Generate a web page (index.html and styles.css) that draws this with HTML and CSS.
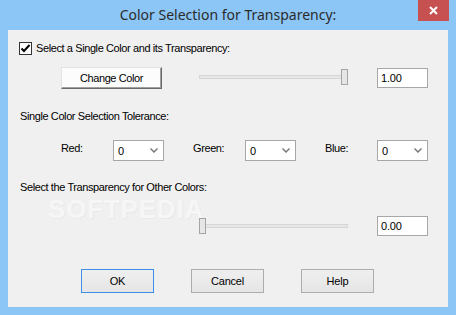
FILE: index.html
```html
<!DOCTYPE html>
<html lang="en">
  <head>
    <meta charset="UTF-8" />
    <title>Color Selection for Transparency:</title>
    <link rel="stylesheet" href="styles.css">
  </head>
  <body>
    <div class="window">
      <div class="titlebar">
        <span class="title">Color Selection for Transparency:</span>
        <span class="close">
          <svg width="9" height="9" viewBox="0 0 9 9">
            <path d="M1 1 L8 8 M8 1 L1 8" stroke="#fff" stroke-width="2" />
          </svg>
        </span>
      </div>

      <div class="client">
        <div class="watermark">SOFTPEDIA</div>

        <label class="check-row">
          <span class="checkbox">
            <svg width="11" height="11" viewBox="0 0 11 11">
              <path d="M1.5 5.5 L4 8 L9.5 2" stroke="#000" stroke-width="2" fill="none" />
            </svg>
          </span>
          <span class="text">Select a Single Color and its Transparency:</span>
        </label>

        <div class="row row-color">
          <button class="classic-btn">Change Color</button>
          <div class="slider">
            <div class="track"></div>
            <div class="thumb" style="left: 142px"></div>
          </div>
          <div class="edit">1.00</div>
        </div>

        <div class="text section">Single Color Selection Tolerance:</div>

        <div class="row row-tolerance">
          <span class="text field-label">Red:</span>
          <div class="combo">
            <span>0</span>
            <svg width="8" height="5" viewBox="0 0 8 5">
              <path d="M0.5 0.5 L4 4 L7.5 0.5" stroke="#7a7a7a" stroke-width="1.5" fill="none" />
            </svg>
          </div>
          <span class="text field-label">Green:</span>
          <div class="combo">
            <span>0</span>
            <svg width="8" height="5" viewBox="0 0 8 5">
              <path d="M0.5 0.5 L4 4 L7.5 0.5" stroke="#7a7a7a" stroke-width="1.5" fill="none" />
            </svg>
          </div>
          <span class="text field-label">Blue:</span>
          <div class="combo">
            <span>0</span>
            <svg width="8" height="5" viewBox="0 0 8 5">
              <path d="M0.5 0.5 L4 4 L7.5 0.5" stroke="#7a7a7a" stroke-width="1.5" fill="none" />
            </svg>
          </div>
        </div>

        <div class="text section section-other">Select the Transparency for Other Colors:</div>

        <div class="row row-other">
          <div class="slider">
            <div class="track"></div>
            <div class="thumb" style="left: 0px"></div>
          </div>
          <div class="edit">0.00</div>
        </div>

        <div class="row row-buttons">
          <button class="btn default">OK</button>
          <button class="btn">Cancel</button>
          <button class="btn">Help</button>
        </div>
      </div>
    </div>
  </body>
</html>
```

FILE: styles.css
```css
body {
  margin: 0;
  background: #8cc6f7;
}

.window {
  width: 456px;
  height: 315px;
  background: #8cc6f7;
  display: flex;
  flex-direction: column;
}

.titlebar {
  height: 30px;
  display: grid;
  grid-template-columns: 1fr auto 1fr;
  align-items: start;
}

.title {
  grid-column: 2;
  font-family: "Noto Sans", sans-serif;
  font-size: 14px;
  color: #2b2b2b;
  line-height: 20px;
  margin-top: 5px;
  white-space: nowrap;
}

.close {
  grid-column: 3;
  justify-self: end;
  width: 31px;
  height: 21px;
  margin-right: 7px;
  background: #c75050;
  display: flex;
  align-items: center;
  justify-content: center;
}

.client {
  position: relative;
  margin: 0 8px;
  height: 277px;
  background: #f0f0f0;
  display: flex;
  flex-direction: column;
  font-family: "Liberation Sans", Arial, sans-serif;
  font-size: 11px;
  color: #000;
}

.text {
  font-size: 11px;
  line-height: 13px;
  letter-spacing: -0.4px;
  white-space: nowrap;
}

.watermark {
  position: absolute;
  left: 40px;
  top: 169px;
  font-family: "Liberation Sans", Arial, sans-serif;
  font-weight: bold;
  font-size: 26px;
  line-height: 20px;
  letter-spacing: 0.8px;
  color: #f6f6f6;
  text-shadow: 1px 1px 0 #e9e9e9;
}

/* checkbox row */
.check-row {
  margin: 12px 0 0 11px;
  height: 13px;
  display: flex;
  align-items: center;
  gap: 4px;
  position: relative;
}

.checkbox {
  width: 13px;
  height: 13px;
  box-sizing: border-box;
  border: 1px solid #333;
  background: #fff;
  display: flex;
  align-items: center;
  justify-content: center;
}

.row {
  display: flex;
  position: relative;
}

/* change color row */
.row-color {
  margin-top: 12px;
  height: 22px;
  align-items: flex-start;
}

.classic-btn {
  margin: 0 0 0 53px;
  width: 101px;
  height: 22px;
  padding: 0;
  box-sizing: border-box;
  background: #fcfcfc;
  border: 1px solid;
  border-color: #e3e3e3 #696969 #696969 #e3e3e3;
  box-shadow: inset -1px -1px 0 #a0a0a0;
  font-family: "Liberation Sans", Arial, sans-serif;
  font-size: 11px;
  letter-spacing: -0.4px;
  color: #000;
}

.slider {
  position: relative;
  width: 149px;
  height: 16px;
  margin: 2px 0 0 37px;
}

.track {
  margin-top: 6px;
  height: 4px;
  box-sizing: border-box;
  border: 1px solid #d6d6d6;
  background: #e7e7e7;
}

.thumb {
  position: absolute;
  top: 0;
  width: 7px;
  height: 16px;
  box-sizing: border-box;
  border: 1px solid #a5a5a5;
  background: #e6e6e6;
}

.edit {
  margin: 1px 0 0 29px;
  width: 51px;
  height: 20px;
  box-sizing: border-box;
  border: 1px solid #a7a7a7;
  background: #fff;
  padding: 3px 0 0 3px;
  font-size: 11px;
  line-height: 13px;
  letter-spacing: -0.2px;
}

/* section labels */
.section {
  position: relative;
  margin: 21px 0 0 12px;
}

.section-other {
  margin-top: 20px;
}

/* tolerance row */
.row-tolerance {
  margin-top: 17px;
  height: 21px;
  padding-left: 53px;
  align-items: flex-start;
}

.field-label {
  width: 52px;
  margin-top: 2px;
}

.field-label + .combo + .field-label {
  margin-left: 29px;
}

.combo {
  width: 51px;
  height: 21px;
  box-sizing: border-box;
  border: 1px solid #a7a7a7;
  background: #fff;
  display: flex;
  align-items: center;
  justify-content: space-between;
  padding: 0 5px 0 4px;
  font-size: 11px;
}

/* other colors row */
.row-other {
  margin-top: 22px;
  height: 21px;
  align-items: flex-start;
}

.row-other .slider {
  margin: 2px 0 0 191px;
}

.row-other .edit {
  margin-top: 0;
}

/* dialog buttons */
.row-buttons {
  margin-top: 32px;
  padding-left: 73px;
  gap: 37px;
}

.btn {
  width: 73px;
  height: 24px;
  padding: 0;
  box-sizing: border-box;
  border: 1px solid #adadad;
  background: linear-gradient(#efefef, #e5e5e5);
  font-family: "Liberation Sans", Arial, sans-serif;
  font-size: 11px;
  letter-spacing: -0.2px;
  color: #000;
}

.btn.default {
  border-color: #3c8fe8;
}
```
